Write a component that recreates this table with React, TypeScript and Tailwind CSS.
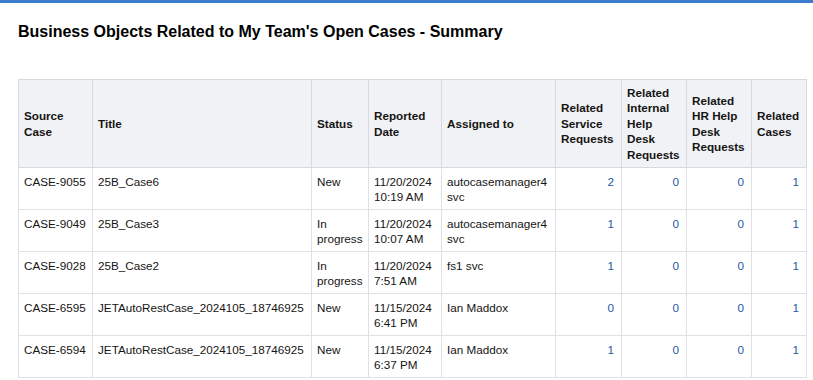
const rows = [
  { id: "CASE-9055", title: "25B_Case6", status: "New", date: ["11/20/2024", "10:19 AM"], who: "autocasemanager4 svc", sr: 2, ih: 0, hr: 0, rc: 1 },
  { id: "CASE-9049", title: "25B_Case3", status: "In progress", date: ["11/20/2024", "10:07 AM"], who: "autocasemanager4 svc", sr: 1, ih: 0, hr: 0, rc: 1 },
  { id: "CASE-9028", title: "25B_Case2", status: "In progress", date: ["11/20/2024", "7:51 AM"], who: "fs1 svc", sr: 1, ih: 0, hr: 0, rc: 1 },
  { id: "CASE-6595", title: "JETAutoRestCase_2024105_18746925", status: "New", date: ["11/15/2024", "6:41 PM"], who: "Ian Maddox", sr: 0, ih: 0, hr: 0, rc: 1 },
  { id: "CASE-6594", title: "JETAutoRestCase_2024105_18746925", status: "New", date: ["11/15/2024", "6:37 PM"], who: "Ian Maddox", sr: 1, ih: 0, hr: 0, rc: 1 },
];

const th = "border border-[#d6d9e0] pl-[5px] pr-[4px] text-left align-middle font-bold leading-[15.5px] whitespace-nowrap";
const td = "border border-[#dfe1e6] pl-[5px] pr-[2px] pt-[6px] pb-[5px] align-top leading-[15px] whitespace-nowrap";
const num = "border border-[#dfe1e6] pr-[7px] pt-[6px] pb-[5px] align-top text-right leading-[15px] text-[#245aa5]";

export default function App() {
  return (
    <div className="w-[813px] h-[380px] bg-white overflow-hidden font-['Liberation_Sans',Arial,sans-serif] text-[#161513]">
      <div className="h-[3px] bg-[#3b7dcc]" />
      <h1 className="mt-[19px] ml-[18px] text-[16px] font-bold text-black leading-[20px]">
        Business Objects Related to My Team's Open Cases - Summary
      </h1>
      <table className="mt-[37px] ml-[18px] w-[788px] table-fixed border-collapse border border-[#d6d9e0] text-[11.7px]">
        <colgroup>
          <col className="w-[74px]" />
          <col className="w-[219px]" />
          <col className="w-[57px]" />
          <col className="w-[73px]" />
          <col className="w-[114px]" />
          <col className="w-[66px]" />
          <col className="w-[65px]" />
          <col className="w-[65px]" />
          <col className="w-[55px]" />
        </colgroup>
        <thead>
          <tr className="h-[88px] bg-[#f1f2f6]">
            <th className={th}>Source<br />Case</th>
            <th className={th}>Title</th>
            <th className={th}>Status</th>
            <th className={th}>Reported<br />Date</th>
            <th className={th}>Assigned to</th>
            <th className={th}>Related<br />Service<br />Requests</th>
            <th className={th}>Related<br />Internal<br />Help<br />Desk<br />Requests</th>
            <th className={th}>Related<br />HR Help<br />Desk<br />Requests</th>
            <th className={th}>Related<br />Cases</th>
          </tr>
        </thead>
        <tbody>
          {rows.map((r) => (
            <tr key={r.id} className="h-[41px]">
              <td className={td}>{r.id}</td>
              <td className={td}>{r.title}</td>
              <td className={td}>
                {r.status === "In progress" ? (<>In<br />progress</>) : r.status}
              </td>
              <td className={td}>{r.date[0]}<br />{r.date[1]}</td>
              <td className={td}>
                {r.who === "autocasemanager4 svc" ? (<>autocasemanager4<br />svc</>) : r.who}
              </td>
              <td className={num}>{r.sr}</td>
              <td className={num}>{r.ih}</td>
              <td className={num}>{r.hr}</td>
              <td className={num}>{r.rc}</td>
            </tr>
          ))}
        </tbody>
      </table>
    </div>
  );
}
